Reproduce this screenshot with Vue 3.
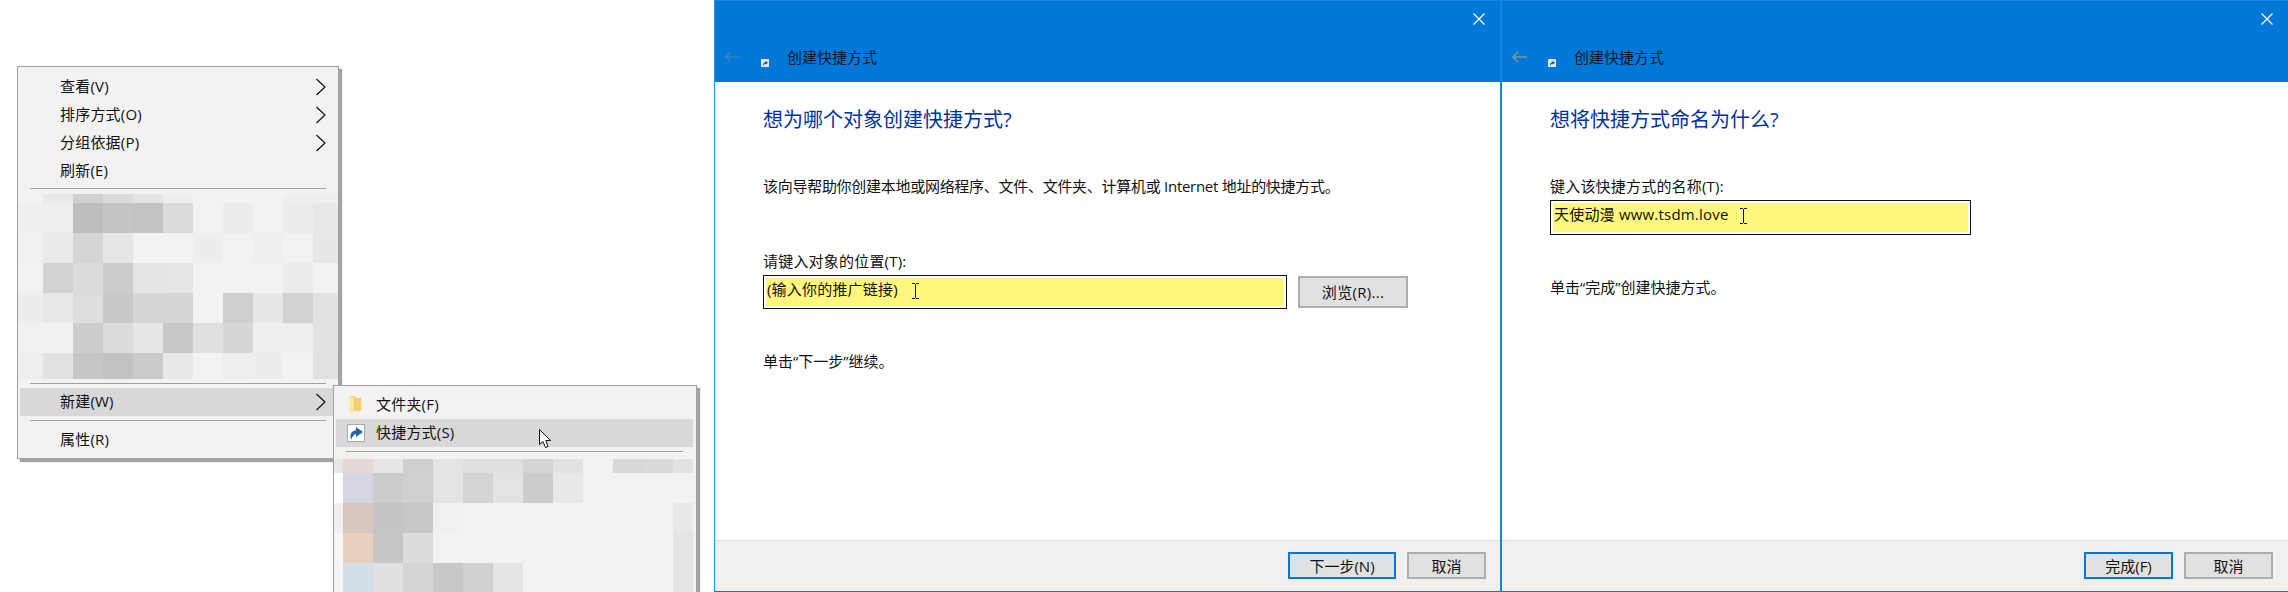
<script setup>
const g = (v) => `#${v}${v}${v}`

const topMenu = [
  { label: '查看(V)', arrow: true },
  { label: '排序方式(O)', arrow: true },
  { label: '分组依据(P)', arrow: true },
  { label: '刷新(E)' }
]

// blurred-out menu entries, one list per mosaic row
const menuMosaic = [
  ['f2', 'e9', 'd0', 'da', 'e4', 'ee', 'f2', 'f2', 'f2', 'ee', 'ee'],
  ['ef', 'ee', 'bd', 'c5', 'c3', 'db', 'f2', 'ec', 'f2', 'ec', 'e8'],
  ['f1', 'ea', 'd5', 'e6', 'f2', 'f2', 'ed', 'f2', 'ee', 'f2', 'e7'],
  ['f2', 'd2', 'dc', 'cc', 'e4', 'e5', 'f2', 'f2', 'f2', 'ec', 'f2'],
  ['ed', 'e8', 'dd', 'c9', 'd6', 'd5', 'f2', 'cf', 'e7', 'd2', 'e2'],
  ['f1', 'f1', 'cd', 'dc', 'e7', 'c8', 'e0', 'd6', 'ef', 'ee', 'e2'],
  ['ee', 'e2', 'c6', 'c1', 'ca', 'e9', 'f2', 'ee', 'ed', 'f2', 'e1']
].flat().map(g)

const subMosaic = [
  g('e8'), '#e4d8d8', g('e5'), g('cf'), g('e4'), g('e0'), g('e0'), g('d4'), g('e2'), g('f2'), g('d8'), g('da'), g('e2'),
  g('ff'), '#d6d6e2', g('cc'), g('d0'), g('e4'), g('d4'), g('e3'), g('cc'), g('e8'), g('f2'), g('f2'), g('f2'), g('f2'),
  g('f0'), '#d9c5c0', g('c5'), g('c8'), g('f0'), g('f2'), g('f2'), g('f2'), g('f2'), g('f2'), g('f2'), g('f2'), g('e8'),
  g('f6'), '#e8d0bf', g('c6'), g('dc'), g('f2'), g('f2'), g('f2'), g('f2'), g('f2'), g('f2'), g('f2'), g('f2'), g('e4'),
  g('f4'), '#d4dee6', g('e0'), g('d4'), g('c8'), g('d0'), g('e4'), g('f2'), g('f2'), g('f2'), g('f2'), g('f2'), g('e4')
]

const wizards = [
  {
    id: 'target',
    heading: '想为哪个对象创建快捷方式?',
    desc: '该向导帮助你创建本地或网络程序、文件、文件夹、计算机或 Internet 地址的快捷方式。',
    label: '请键入对象的位置(T):',
    value: '(输入你的推广链接)',
    browse: true,
    hint: '单击“下一步”继续。',
    primary: '下一步(N)'
  },
  {
    id: 'name',
    heading: '想将快捷方式命名为什么?',
    label: '键入该快捷方式的名称(T):',
    value: '天使动漫 www.tsdm.love',
    hint: '单击“完成”创建快捷方式。',
    primary: '完成(F)'
  }
]
</script>

<template>
  <div class="screen">
    <div class="desktop">
      <div class="menu menu-main">
        <div v-for="item in topMenu" :key="item.label" class="row">
          <span class="text">{{ item.label }}</span>
          <svg v-if="item.arrow" class="chevron" width="10" height="18" viewBox="0 0 10 18">
            <path d="M0.5 1 L9 9 L0.5 17" fill="none" stroke="#111" stroke-width="1.2" />
          </svg>
        </div>
        <div class="sep"></div>
        <div class="mosaic mosaic-main">
          <i v-for="(c, i) in menuMosaic" :key="i" :style="{ background: c }"></i>
        </div>
        <div class="sep sep-low"></div>
        <div class="row active">
          <span class="text">新建(W)</span>
          <svg class="chevron" width="10" height="18" viewBox="0 0 10 18">
            <path d="M0.5 1 L9 9 L0.5 17" fill="none" stroke="#111" stroke-width="1.2" />
          </svg>
        </div>
        <div class="sep sep-tight"></div>
        <div class="row last"><span class="text">属性(R)</span></div>
      </div>

      <div class="menu menu-sub">
        <div class="row">
          <svg class="row-icon" width="18" height="18" viewBox="0 0 18 18">
            <path d="M2 0 H8 L9.5 2 H14.5 V15 H6 L2 17.5 Z" fill="#f6d06f" />
            <path d="M2 0 L6.5 1.5 V15 L2 17.5 Z" fill="#ffe9ab" />
          </svg>
          <span class="text">文件夹(F)</span>
        </div>
        <div class="row active">
          <svg class="row-icon" width="18" height="18" viewBox="0 0 18 18">
            <rect x="0.5" y="0.5" width="17" height="17" fill="#fff" stroke="#a8a8a8" />
            <path d="M4 16 C2.5 10 4.5 6.8 9 6.2 V3 L16 8 L9 13 V10 C7 10.2 5.5 12.5 4 16 Z" fill="#2b62a8" />
          </svg>
          <span class="text">快捷方式(S)</span>
        </div>
        <div class="sep sep-sub"></div>
        <div class="mosaic mosaic-sub">
          <i v-for="(c, i) in subMosaic" :key="i" :style="{ background: c }"></i>
        </div>
      </div>

      <svg class="pointer" width="14" height="20" viewBox="0 0 14 20">
        <path d="M0.5 0.5 V15.5 L4 12.5 L6.5 18.5 L9 17.5 L6.8 11.5 H11.5 Z" fill="#fff" stroke="#111" stroke-width="1" />
      </svg>
    </div>

    <section v-for="w in wizards" :key="w.id" class="wizard" :class="`wizard-${w.id}`">
      <header class="titlebar">
        <svg class="close" width="12" height="12" viewBox="0 0 12 12">
          <path d="M0.5 0.5 L11.5 11.5 M11.5 0.5 L0.5 11.5" stroke="#fff" stroke-width="1.2" />
        </svg>
        <div class="nav">
          <svg class="back" width="15" height="12" viewBox="0 0 15 12">
            <path d="M6 1 L1 6 L6 11 M1 6 H15" fill="none" stroke="currentColor" stroke-width="1.6" />
          </svg>
          <svg class="mini" width="8" height="8" viewBox="0 0 8 8">
            <rect width="8" height="8" fill="#dfe6ef" />
            <path d="M2 7 C2 4.5 3 3.5 4.5 3.3 V2 L7 3.8 L4.5 5.6 V4.6 C3.5 4.8 3 5.6 2 7 Z" fill="#1f3f73" />
          </svg>
          <span class="title">创建快捷方式</span>
        </div>
      </header>

      <div class="body">
        <h1>{{ w.heading }}</h1>
        <p v-if="w.desc" class="desc">{{ w.desc }}</p>
        <label>{{ w.label }}</label>
        <div class="field-row">
          <div class="field">
            <div class="fill">
              <span>{{ w.value }}</span>
              <svg class="ibeam" width="7" height="16" viewBox="0 0 7 16">
                <path d="M0 0.5 H3 M4 0.5 H7 M3.5 1 V15 M0 15.5 H3 M4 15.5 H7" stroke="#111" stroke-width="1" />
              </svg>
            </div>
          </div>
          <button v-if="w.browse" class="btn browse">浏览(R)...</button>
        </div>
        <p class="hint">{{ w.hint }}</p>
      </div>

      <footer class="actions">
        <button class="btn primary">{{ w.primary }}</button>
        <button class="btn cancel">取消</button>
      </footer>
    </section>
  </div>
</template>

<style scoped>
.screen {
  position: relative;
  display: flex;
  width: 2288px;
  height: 592px;
  overflow: hidden;
  background: #fff;
  color: #111;
  font-family: "Open Sans", "Noto Sans CJK SC", sans-serif;
  font-size: 15px;
}

.desktop {
  position: relative;
  flex: 0 0 714px;
}

.menu {
  position: absolute;
  box-sizing: border-box;
  background: #f2f2f2;
  border: 1px solid #a0a0a0;
  box-shadow: 3px 3px 1px #a3a3a3;
}

.menu-main {
  left: 17px;
  top: 66px;
  width: 322px;
  padding-top: 6px;
}

.menu-sub {
  left: 333px;
  top: 385px;
  width: 364px;
  height: 240px;
  padding-top: 5px;
}

.row {
  display: flex;
  align-items: center;
  justify-content: space-between;
  height: 28px;
  margin: 0 2px;
  padding: 0 10px 0 40px;
}

.row.active {
  background: #d8d8d8;
}

.row.last {
  margin-top: 5px;
  margin-bottom: 4px;
}

.text {
  margin-top: -3px;
  letter-spacing: 0.2px;
}

.chevron {
  display: block;
}

.sep {
  height: 1px;
  margin: 3px 12px 5px;
  background: #a0a0a0;
}

.sep-low {
  margin: 4px 12px 4px;
}

.sep-tight {
  margin: 4px 12px 0;
}

.mosaic {
  display: grid;
}

.mosaic-main {
  grid-template-columns: 25px repeat(9, 30px) 25px;
  grid-template-rows: 9px repeat(5, 30px) 26px;
}

.mosaic-sub {
  grid-template-columns: 9px repeat(11, 30px) 20px;
  grid-template-rows: 14px repeat(4, 30px);
}

.menu-sub .row {
  justify-content: flex-start;
  margin: 0 3px 0 2px;
  padding: 0 0 0 11px;
}

.row-icon {
  flex: none;
  margin-right: 11px;
}

.sep-sub {
  margin: 4px 13px 7px 12px;
}

.pointer {
  position: absolute;
  left: 539px;
  top: 429px;
}

.wizard {
  display: flex;
  flex-direction: column;
  box-sizing: border-box;
  height: 592px;
  border-bottom: 1px solid #0078d7;
}

.wizard-target {
  flex: 0 0 786px;
  border-left: 1px solid #2f90e2;
}

.wizard-name {
  flex: 0 0 788px;
  border-left: 2px solid #1583e0;
}

.titlebar {
  display: flex;
  flex-direction: column;
  box-sizing: border-box;
  height: 82px;
  border-top: 1px solid #1a86dd;
  background: #0078d7;
}

.close {
  align-self: flex-end;
  margin: 12px 15px 0 0;
}

.nav {
  display: flex;
  align-items: center;
  height: 22px;
  margin-top: 21px;
  padding-left: 10px;
}

.back {
  color: #3a80c6;
}

.wizard-name .back {
  color: #7a93ab;
}

.mini {
  align-self: flex-end;
  margin: 0 18px 1px 21px;
}

.title {
  color: #06182c;
  line-height: 22px;
}

.body {
  flex: 1;
  padding: 24px 0 0 48px;
}

h1 {
  margin: 0;
  color: #003399;
  font-size: 20px;
  font-weight: 400;
  line-height: 28px;
}

.desc {
  margin: 41px 0 0;
  letter-spacing: -0.28px;
  line-height: 22px;
}

label {
  display: block;
  margin-top: 41px;
  letter-spacing: 0.2px;
  line-height: 22px;
}

.desc + label {
  margin-top: 53px;
}

.field-row {
  display: flex;
  align-items: center;
  gap: 11px;
  margin-top: 3px;
}

.field {
  box-sizing: border-box;
  width: 524px;
  height: 34px;
  padding: 2px;
  border: 1px solid #111;
  background: #fff;
}

.wizard-name .field {
  width: 421px;
  height: 35px;
}

.fill {
  display: flex;
  align-items: flex-start;
  height: 100%;
  padding-left: 1px;
  background: #fff77e;
  letter-spacing: 0.2px;
  line-height: 22px;
}

.ibeam {
  margin: 5px 0 0 14px;
}

.wizard-name .ibeam {
  margin-left: 11px;
}

.hint {
  margin: 41px 0 0;
  line-height: 22px;
}

.actions {
  display: flex;
  flex: none;
  justify-content: flex-end;
  gap: 11px;
  box-sizing: border-box;
  height: 51px;
  padding: 11px 14px 0 0;
  border-top: 1px solid #e0e0e0;
  background: #f0f0f0;
}

.wizard-name .actions {
  padding-right: 15px;
}

.btn {
  box-sizing: border-box;
  height: 27px;
  padding: 0;
  border: 2px solid #adadad;
  border-radius: 0;
  background: #e1e1e1;
  color: #111;
  font: inherit;
  line-height: 22px;
}

.btn.primary {
  width: 108px;
  border-color: #0078d7;
}

.btn.cancel {
  width: 79px;
}

.wizard-name .btn.primary {
  width: 89px;
}

.wizard-name .btn.cancel {
  width: 89px;
}

.btn.browse {
  flex: none;
  width: 110px;
  height: 32px;
  letter-spacing: 0.3px;
}
</style>

<style>
html,
body {
  margin: 0;
  background: #fff;
}
</style>
